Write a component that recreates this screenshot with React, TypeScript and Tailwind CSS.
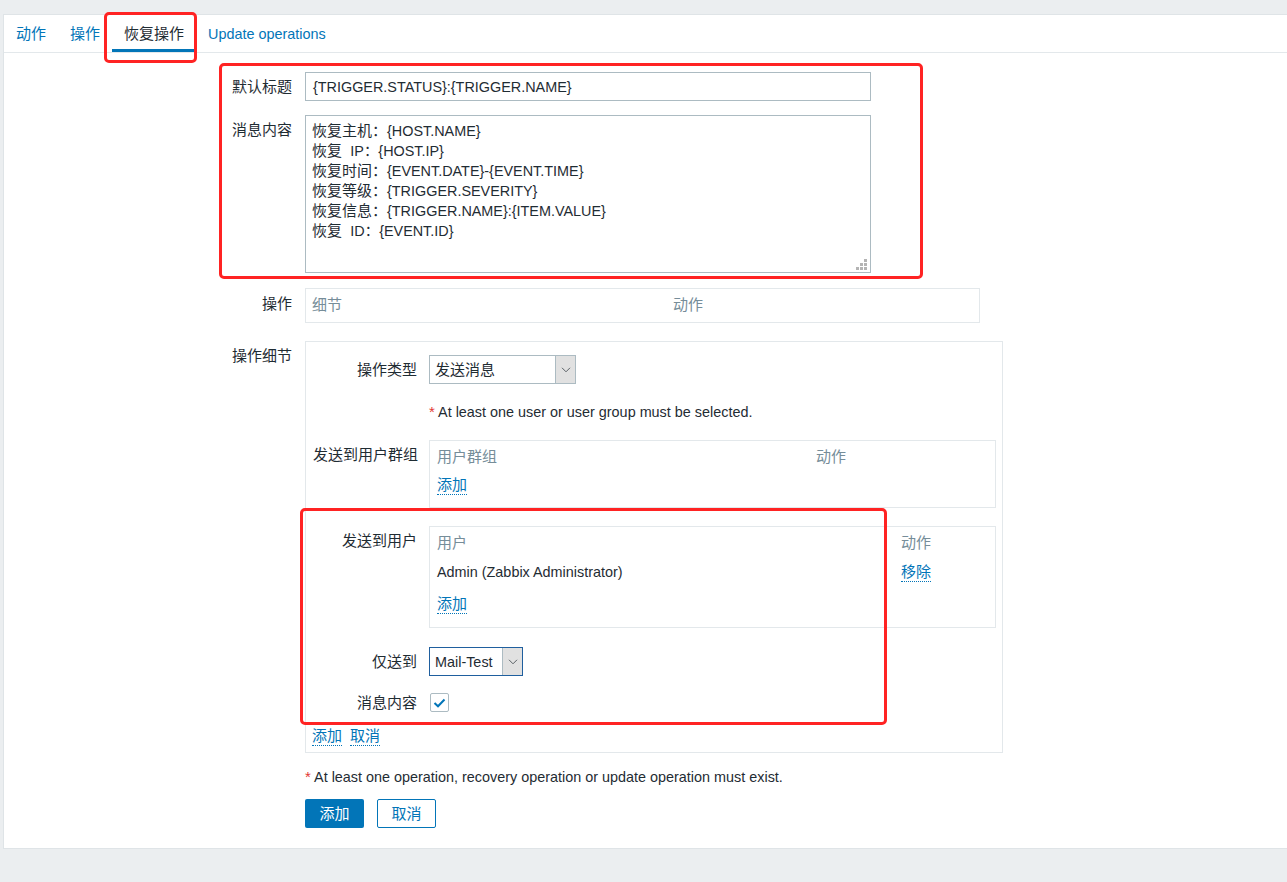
import React from "react";

type Kids = { children?: React.ReactNode };

// Latin text runs a touch smaller than the CJK glyphs around it
function Lat({ children }: Kids) {
  return <span className="text-[14.4px]">{children}</span>;
}

function DotLink({ children }: Kids) {
  return (
    <span className="inline-block leading-[18px] text-[#0275b8] border-b border-dotted border-[#0275b8]">
      {children}
    </span>
  );
}

function Chevron() {
  return (
    <svg width="10" height="6" viewBox="0 0 10 6" fill="none">
      <path d="M1 0.8 L5 4.8 L9 0.8" stroke="#5a6166" strokeWidth="1" />
    </svg>
  );
}

function Select({ value, wide }: { value: React.ReactNode; wide?: boolean }) {
  return (
    <div
      className={
        wide
          ? "flex h-[29px] w-[147px] border border-[#acbbc2] bg-white"
          : "flex h-[29px] w-[94px] border border-[#1f5f9e] bg-white"
      }
    >
      <div className="flex flex-1 items-center pl-[5px]">{value}</div>
      <div className="flex w-[20px] items-center justify-center border-l border-[#acbbc2] bg-[#e1e1e1]">
        <Chevron />
      </div>
    </div>
  );
}

function Row({
  label,
  labelClass,
  className,
  children,
}: Kids & { label?: React.ReactNode; labelClass?: string; className?: string }) {
  return (
    <div className={"flex " + (className ?? "")}>
      <div className={"w-[288px] shrink-0 text-right " + (labelClass ?? "")}>{label}</div>
      <div className="ml-[13px]">{children}</div>
    </div>
  );
}

function InnerRow({
  label,
  labelClass,
  className,
  children,
}: Kids & { label?: React.ReactNode; labelClass?: string; className?: string }) {
  return (
    <div className={"flex " + (className ?? "")}>
      <div className={"w-[104px] shrink-0 text-right " + (labelClass ?? "")}>{label}</div>
      <div className="ml-[12px]">{children}</div>
    </div>
  );
}

function Grip() {
  const dots: [number, number][] = [
    [8, 0],
    [4, 4],
    [8, 4],
    [0, 8],
    [4, 8],
    [8, 8],
  ];
  return (
    <svg width="11" height="11" viewBox="0 0 11 11" className="absolute bottom-[2px] right-[3px]">
      {dots.map(([x, y]) => (
        <rect key={`${x}-${y}`} x={x} y={y} width="3" height="3" fill="#b4b4b4" />
      ))}
    </svg>
  );
}

const tabs = [
  { label: "动作", active: false },
  { label: "操作", active: false },
  { label: "恢复操作", active: true },
  { label: <Lat>Update operations</Lat>, active: false },
];

const messageLines: [string, string][] = [
  ["恢复主机：", "{HOST.NAME}"],
  ["恢复  ", "IP：{HOST.IP}"],
  ["恢复时间：", "{EVENT.DATE}-{EVENT.TIME}"],
  ["恢复等级：", "{TRIGGER.SEVERITY}"],
  ["恢复信息：", "{TRIGGER.NAME}:{ITEM.VALUE}"],
  ["恢复  ", "ID：{EVENT.ID}"],
];

export default function App() {
  return (
    <div className="relative min-h-[882px] bg-[#ebeef0] pl-[3px] pt-[14px] font-['Liberation_Sans','Noto_Sans_CJK_SC',sans-serif] text-[15px] leading-[20px] text-[#1f2c33]">
      <div className="border-b border-l border-t border-[#dfe4e7] bg-white pb-[20px]">
        {/* tab strip */}
        <div className="flex h-[38px] border-b border-[#e3e8eb]">
          {tabs.map((t, i) => (
            <div
              key={i}
              className={
                t.active
                  ? "flex h-[37px] items-center border-b-[3px] border-[#0275b8] px-3 pt-[3px] text-[#1f2c33]"
                  : "flex h-[37px] items-center border-b-[3px] border-transparent px-3 pt-[3px] text-[#0275b8]"
              }
            >
              {t.label}
            </div>
          ))}
        </div>

        <div className="pt-[19px]">
          <Row label="默认标题" labelClass="leading-[29px]">
            <div className="flex h-[29px] w-[566px] items-center border border-[#acbbc2] px-[7px]">
              <Lat>{"{TRIGGER.STATUS}:{TRIGGER.NAME}"}</Lat>
            </div>
          </Row>

          <Row label="消息内容" labelClass="pt-[5px]" className="mt-[14px]">
            <div className="relative h-[158px] w-[566px] border border-[#acbbc2] px-[6px] pt-[5px]">
              {messageLines.map(([zh, rest], i) => (
                <div key={i} className="whitespace-pre">
                  {zh}
                  <Lat>{rest}</Lat>
                </div>
              ))}
              <Grip />
            </div>
          </Row>

          <Row label="操作" labelClass="pt-[6px]" className="mt-[15px]">
            <div className="flex h-[35px] w-[675px] border border-[#e3e8eb] px-[6px] pt-[6px] text-[#768d99]">
              <div className="w-[361px]">细节</div>
              <div>动作</div>
            </div>
          </Row>

          <Row label="操作细节" labelClass="pt-[5px]" className="mt-[18px]">
            <div className="w-[698px] border border-[#e3e8eb] px-[7px] pb-[6px] pt-[13px]">
              <InnerRow label="操作类型" labelClass="leading-[29px]">
                <Select wide value="发送消息" />
              </InnerRow>

              <InnerRow className="mt-[18px]">
                <span className="text-[#e33734]">*</span>
                <Lat> At least one user or user group must be selected.</Lat>
              </InnerRow>

              <InnerRow label="发送到用户群组" labelClass="pt-[5px] whitespace-nowrap" className="mt-[18px]">
                <div className="w-[567px] border border-[#e3e8eb] px-[7px] pb-[12px] pt-[6px]">
                  <div className="flex text-[#768d99]">
                    <div className="w-[379px]">用户群组</div>
                    <div>动作</div>
                  </div>
                  <div className="mt-[8px]">
                    <DotLink>添加</DotLink>
                  </div>
                </div>
              </InnerRow>

              <InnerRow label="发送到用户" labelClass="pt-[5px]" className="mt-[18px]">
                <div className="w-[567px] border border-[#e3e8eb] px-[7px] pb-[13px] pt-[6px]">
                  <div className="flex text-[#768d99]">
                    <div className="w-[464px]">用户</div>
                    <div>动作</div>
                  </div>
                  <div className="mt-[9px] flex">
                    <div className="w-[464px]">
                      <Lat>Admin (Zabbix Administrator)</Lat>
                    </div>
                    <div>
                      <DotLink>移除</DotLink>
                    </div>
                  </div>
                  <div className="mt-[12px]">
                    <DotLink>添加</DotLink>
                  </div>
                </div>
              </InnerRow>

              <InnerRow label="仅送到" labelClass="leading-[29px]" className="mt-[19px]">
                <Select value={<Lat>Mail-Test</Lat>} />
              </InnerRow>

              <InnerRow label="消息内容" className="mt-[17px]">
                <div className="ml-[1px] flex h-[19px] w-[19px] items-center justify-center rounded-[2px] border border-[#acbbc2]">
                  <svg width="13" height="10" viewBox="0 0 13 10" fill="none">
                    <path d="M1.5 5 L5 8.3 L11.5 1.5" stroke="#0275b8" strokeWidth="2" />
                  </svg>
                </div>
              </InnerRow>

              <div className="-ml-px mt-[14px] flex gap-[8px]">
                <DotLink>添加</DotLink>
                <DotLink>取消</DotLink>
              </div>
            </div>
          </Row>

          <Row className="mt-[14px]">
            <span className="text-[#e33734]">*</span>
            <Lat> At least one operation, recovery operation or update operation must exist.</Lat>
          </Row>

          <Row className="mt-[12px]">
            <div className="flex gap-[13px]">
              <div className="flex h-[29px] w-[59px] items-center justify-center rounded-[2px] bg-[#0275b8] text-white">
                添加
              </div>
              <div className="flex h-[29px] w-[59px] items-center justify-center rounded-[2px] border border-[#0275b8] bg-white text-[#0275b8]">
                取消
              </div>
            </div>
          </Row>
        </div>
      </div>

      {/* red highlight frames drawn over the form */}
      <div className="pointer-events-none absolute left-[104px] top-[12px] h-[51px] w-[93px] rounded-[5px] border-[3px] border-[#ff2323]" />
      <div className="pointer-events-none absolute left-[219px] top-[63px] h-[216px] w-[704px] rounded-[5px] border-[3px] border-[#ff2323]" />
      <div className="pointer-events-none absolute left-[300px] top-[508px] h-[217px] w-[587px] rounded-[5px] border-[3px] border-[#ff2323]" />
    </div>
  );
}
